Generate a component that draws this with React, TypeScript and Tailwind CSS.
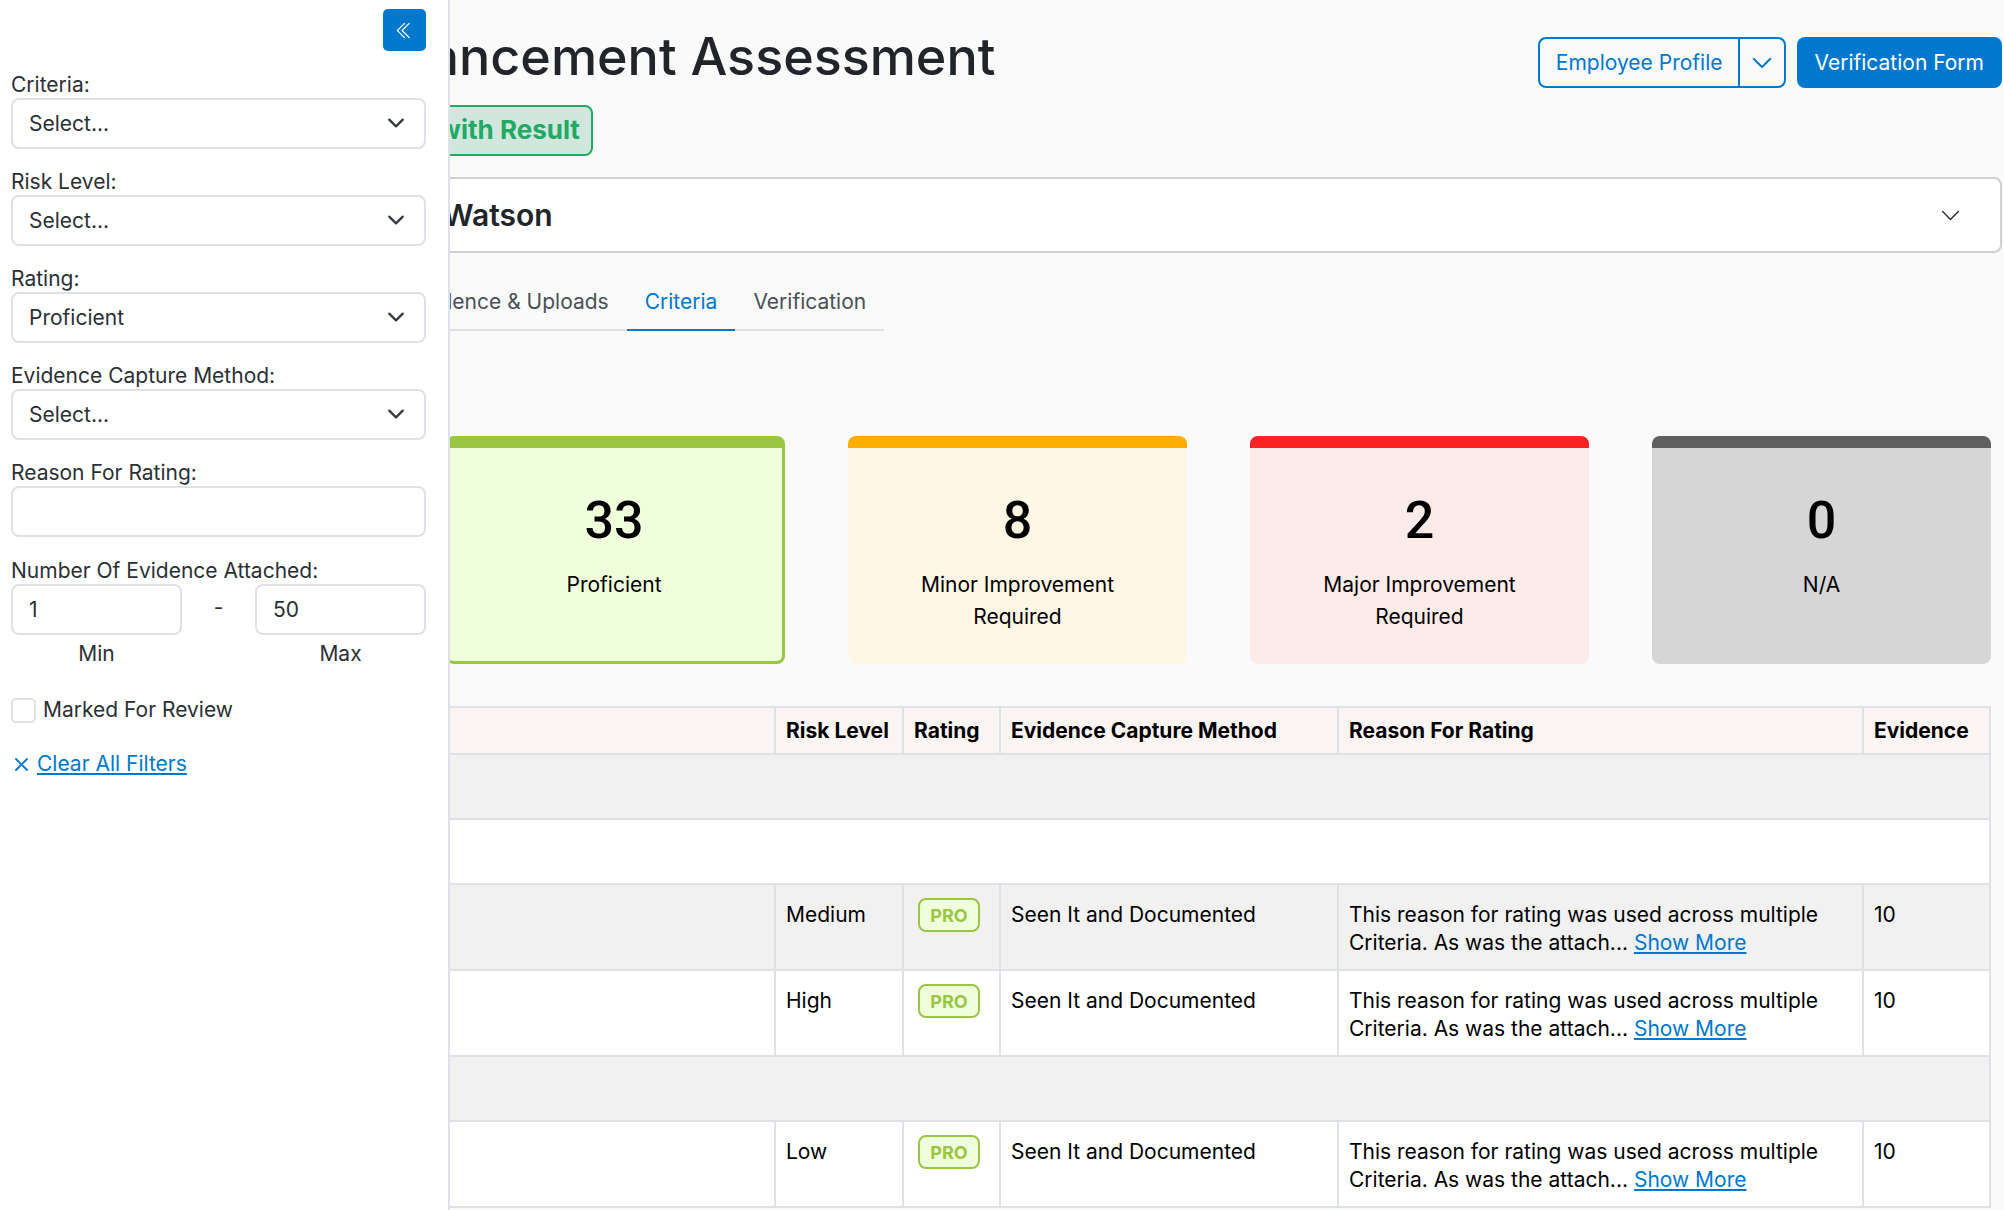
import { useState } from 'react';
import clsx from 'clsx';
import { BsChevronDoubleLeft, BsChevronDown } from 'react-icons/bs';

const selects = [
  { id: 'criteria', label: 'Criteria:', value: 'Select...' },
  { id: 'risk', label: 'Risk Level:', value: 'Select...' },
  { id: 'rating', label: 'Rating:', value: 'Proficient' },
  { id: 'method', label: 'Evidence Capture Method:', value: 'Select...' },
];

const tabs = ['Evidence & Uploads', 'Criteria', 'Verification'];

const cards = [
  { count: 33, label: 'Proficient', style: 'col-start-2 border-r-[3px] border-b-[3px] border-[#9ac643] bg-[#f0ffdb]' },
  { count: 8, label: 'Minor Improvement Required', style: 'border-[#ffad00] bg-[#fff6e5]' },
  { count: 2, label: 'Major Improvement Required', style: 'border-[#fa2323] bg-[#fdebe9]' },
  { count: 0, label: 'N/A', style: 'border-[#5f5f5f] bg-[#d6d6d6]' },
];

// null is a section row that spans the whole table
const rows = [null, null, 'Medium', 'High', null, 'Low'];

const field = 'h-[51px] w-full rounded-lg border-2 border-[#dee2e6] bg-white px-4';
const fieldLabel = 'block pt-[7px] leading-[26px]';
const cell = 'border-2 border-[#dee2e6] px-2.5';

function FilterDrawer() {
  return (
    <aside className="fixed inset-y-0 left-0 z-10 w-[450px] border-r-2 border-[#dee2e6] bg-white pt-[9px] pr-[22px] pl-[11px] text-[#2b3035]">
      <div className="flex justify-end">
        <button aria-label="Collapse filters" className="flex h-[42px] w-[43px] items-center justify-center rounded-[5px] bg-[#0078cd] text-white">
          <BsChevronDoubleLeft size={19} />
        </button>
      </div>

      <form className="mt-3.5">
        {selects.map((s) => (
          <div key={s.id} className="mb-[13px]">
            <label htmlFor={s.id} className={fieldLabel}>{s.label}</label>
            <div className="relative">
              <select id={s.id} className={clsx(field, 'appearance-none')}>
                <option>{s.value}</option>
              </select>
              <svg viewBox="0 0 16 16" className="pointer-events-none absolute top-4 right-[21px] size-[18px]" fill="none" stroke="#343a40" strokeWidth="2" strokeLinecap="round" strokeLinejoin="round">
                <path d="m2 5 6 6 6-6" />
              </svg>
            </div>
          </div>
        ))}

        <div className="mb-3.5">
          <label htmlFor="reason" className={fieldLabel}>Reason For Rating:</label>
          <input id="reason" type="text" className={clsx(field, 'block')} />
        </div>

        <fieldset>
          <legend className={fieldLabel}>Number Of Evidence Attached:</legend>
          <div className="flex">
            <div className="w-[171px] text-center">
              <input id="min" type="number" defaultValue={1} className={clsx(field, 'block')} />
              <label htmlFor="min" className="mt-[3px] block leading-8">Min</label>
            </div>
            <span className="flex-1 text-center leading-[48px]">-</span>
            <div className="w-[171px] text-center">
              <input id="max" type="number" defaultValue={50} className={clsx(field, 'block')} />
              <label htmlFor="max" className="mt-[3px] block leading-8">Max</label>
            </div>
          </div>
        </fieldset>

        <div className="mt-6 flex items-center gap-[7px]">
          <input id="review" type="checkbox" className="size-[25px] appearance-none rounded-[5px] border-2 border-[#dee2e6] bg-white" />
          <label htmlFor="review" className="leading-8">Marked For Review</label>
        </div>

        <a href="#clear" className="mt-[22px] inline-flex items-center gap-1.5 leading-8 text-[#0078cd]">
          <svg viewBox="0 0 20 20" className="size-5" fill="none" stroke="currentColor" strokeWidth="1.8" strokeLinecap="round">
            <path d="m5 5 11 11M16 5 5 16" />
          </svg>
          <span className="underline">Clear All Filters</span>
        </a>
      </form>
    </aside>
  );
}

export default function App() {
  const [tab, setTab] = useState('Criteria');

  return (
    <div className="min-h-screen overflow-hidden bg-[#fafafa] font-[Inter,sans-serif] text-[21px] text-[#212529]">
      <FilterDrawer />

      <main className="pr-0.5 pl-3">
        <header className="flex justify-between pt-6">
          <div className="pl-[319px]">
            <h1 className="text-[52px] leading-[66px] font-medium">Advancement Assessment</h1>
            <span className="mt-[15px] inline-block h-[51px] rounded-lg border-2 border-[#22a965] bg-[#d1e7dd] px-[11px] text-[26px] leading-[46px] font-bold text-[#22a965]">
              Closed with Result
            </span>
          </div>
          <div className="mt-[13px] flex h-[51px] gap-[11px]">
            <div className="flex rounded-lg border-2 border-[#0078cd] text-[#0078cd]">
              <button className="pr-[15px] pl-4">Employee Profile</button>
              <button aria-label="More profiles" className="border-l-2 border-[#0078cd] px-[11px]">
                <BsChevronDown size={22} strokeWidth={0.7} />
              </button>
            </div>
            <button className="rounded-lg bg-[#0078cd] px-[18px] text-white">Verification Form</button>
          </div>
        </header>

        <button className="mt-[21px] flex h-[76px] w-full items-center justify-between rounded-lg border-2 border-[#ced0d2] bg-white pr-[39px] pl-[332px]">
          <span className="text-[30px] font-semibold">Emma Watson</span>
          <BsChevronDown size={21} />
        </button>

        <nav className="mt-[22px] flex">
          <div className="flex border-b-2 border-[#dee2e6] pl-[380px]">
            {tabs.map((t) => (
              <button
                key={t}
                onClick={() => setTab(t)}
                className={clsx('-mb-0.5 h-14 border-b-2 px-[18px] leading-8', t === tab ? 'border-[#0078cd] text-[#0078cd]' : 'border-transparent text-[#495057]')}
              >
                {t}
              </button>
            ))}
          </div>
        </nav>

        <section className="mt-[105px] mr-[11px] ml-8 grid grid-cols-5 gap-[63px] text-black">
          {cards.map((c) => (
            <div key={c.label} className={clsx('h-[228px] rounded-lg border-t-12 px-10 pt-9 text-center', c.style)}>
              <div className="font-[Roboto,sans-serif] text-[52px] leading-[74px] font-medium">{c.count}</div>
              <div className="mt-[11px] leading-8">{c.label}</div>
            </div>
          ))}
        </section>

        <div className="mt-[42px] pr-[11px]">
          <table className="w-full table-fixed border-collapse text-left text-black">
            <thead>
              <tr className="h-[47px] bg-[#faf4f2]">
                <th className={cell} />
                <th className={clsx(cell, 'w-32')}>Risk Level</th>
                <th className={clsx(cell, 'w-[97px]')}>Rating</th>
                <th className={clsx(cell, 'w-[338px]')}>Evidence Capture Method</th>
                <th className={clsx(cell, 'w-[525px]')}>Reason For Rating</th>
                <th className={clsx(cell, 'w-[127px]')}>Evidence</th>
              </tr>
            </thead>
            <tbody>
              {rows.map((risk, i) =>
                risk === null ? (
                  <tr key={i} className="h-[65px] odd:bg-[#f1f1f1] even:bg-white">
                    <td colSpan={6} className={cell} />
                  </tr>
                ) : (
                  <tr key={i} className="h-[86px] align-top leading-7 odd:bg-[#f1f1f1] even:bg-white">
                    <td className={cell} />
                    <td className={clsx(cell, 'pt-4')}>{risk}</td>
                    <td className={clsx(cell, 'pt-[13px]')}>
                      <span className="ml-1 block h-[34px] w-[62px] rounded-lg border-2 border-[#9ac643] bg-[#f0ffdb] text-center text-[18px] leading-[31px] font-bold text-[#9ac643]">
                        PRO
                      </span>
                    </td>
                    <td className={clsx(cell, 'pt-4')}>Seen It and Documented</td>
                    <td className={clsx(cell, 'pt-4')}>
                      This reason for rating was used across multiple Criteria. As was the attach...{' '}
                      <a href="#more" className="text-[#0078cd] underline">Show More</a>
                    </td>
                    <td className={clsx(cell, 'pt-4')}>10</td>
                  </tr>
                ),
              )}
            </tbody>
          </table>
        </div>
      </main>
    </div>
  );
}
